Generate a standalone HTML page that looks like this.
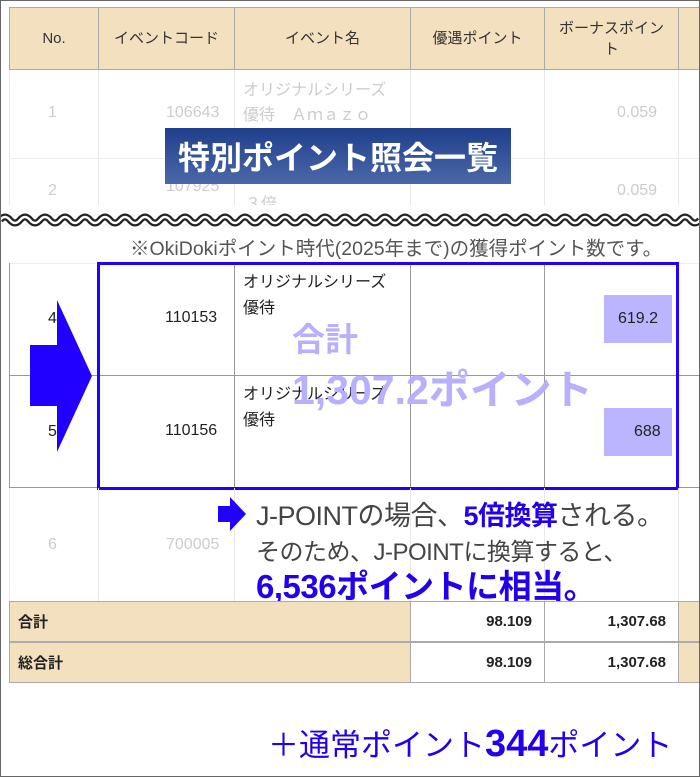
<!DOCTYPE html>
<html><head><meta charset="utf-8"><style>
*{margin:0;padding:0;box-sizing:border-box}
body{width:700px;height:777px;position:relative;background:#fff;overflow:hidden;font-family:"Liberation Sans","Noto Sans CJK JP",sans-serif;color:#222}
.frame{position:absolute;left:0;top:0;width:700px;height:777px;border:1px solid #666}
.a{position:absolute}
.hd{position:absolute;top:7px;height:63px;background:#f3e0bf;border:1px solid #aaa;display:flex;align-items:center;justify-content:center;text-align:center;font-size:15px;color:#333;line-height:21px}
.vl{position:absolute;width:1px;background:#e8e8e8}
.vg{position:absolute;width:1px;background:#999}
.f{color:#ccc;font-size:16px;position:absolute}
.d{color:#222;font-size:16px;position:absolute}
.ft{position:absolute;height:41px;border:1px solid #aaa;font-size:15px;display:flex;align-items:center}
</style></head><body>
<div class="frame"></div>
<div class="hd" style="left:9px;width:90px">No.</div>
<div class="hd" style="left:98px;width:137px">イベントコード</div>
<div class="hd" style="left:234px;width:177px">イベント名</div>
<div class="hd" style="left:410px;width:135px">優遇ポイント</div>
<div class="hd" style="left:544px;width:135px">ボーナスポイン<br>ト</div>
<div class="hd" style="left:678px;width:30px"></div>
<div class="vl" style="left:9px;top:70px;height:150px"></div>
<div class="vl" style="left:98px;top:70px;height:150px"></div>
<div class="vl" style="left:234px;top:70px;height:150px"></div>
<div class="vl" style="left:410px;top:70px;height:150px"></div>
<div class="vl" style="left:544px;top:70px;height:150px"></div>
<div class="vl" style="left:678px;top:70px;height:150px"></div>
<div class="a" style="left:9px;top:158px;width:690px;height:1px;background:#eee"></div>
<div class="f" style="left:48px;top:104px">1</div>
<div class="f" style="left:166px;top:104px">106643</div>
<div class="f" style="left:243px;top:78px;line-height:25px">オリジナルシリーズ<br>優待　Ａｍａｚｏ</div>
<div class="f" style="left:617px;top:104px">0.059</div>
<div class="f" style="left:48px;top:182px">2</div>
<div class="f" style="left:166px;top:178px">107925</div>
<div class="f" style="left:245px;top:190px">３倍</div>
<div class="f" style="left:617px;top:182px">0.059</div>
<div class="a" style="left:165px;top:128px;width:346px;height:56px;background:linear-gradient(#1f3f8c,#4a68a8);color:#fff;font-weight:bold;font-size:32px;display:flex;align-items:center;justify-content:center">特別ポイント照会一覧</div>
<div class="a" style="left:0;top:205px;width:700px;height:58px;background:#fff"></div>
<svg class="a" style="left:0;top:208px" width="700" height="24"><g transform="translate(0,2)"><path id="w" d="M0 10 Q5 4 10 10 T20 10 T30 10 T40 10 T50 10 T60 10 T70 10 T80 10 T90 10 T100 10 T110 10 T120 10 T130 10 T140 10 T150 10 T160 10 T170 10 T180 10 T190 10 T200 10 T210 10 T220 10 T230 10 T240 10 T250 10 T260 10 T270 10 T280 10 T290 10 T300 10 T310 10 T320 10 T330 10 T340 10 T350 10 T360 10 T370 10 T380 10 T390 10 T400 10 T410 10 T420 10 T430 10 T440 10 T450 10 T460 10 T470 10 T480 10 T490 10 T500 10 T510 10 T520 10 T530 10 T540 10 T550 10 T560 10 T570 10 T580 10 T590 10 T600 10 T610 10 T620 10 T630 10 T640 10 T650 10 T660 10 T670 10 T680 10 T690 10 T700 10" fill="none" stroke="#222" stroke-width="7"/><path d="M0 10 Q5 4 10 10 T20 10 T30 10 T40 10 T50 10 T60 10 T70 10 T80 10 T90 10 T100 10 T110 10 T120 10 T130 10 T140 10 T150 10 T160 10 T170 10 T180 10 T190 10 T200 10 T210 10 T220 10 T230 10 T240 10 T250 10 T260 10 T270 10 T280 10 T290 10 T300 10 T310 10 T320 10 T330 10 T340 10 T350 10 T360 10 T370 10 T380 10 T390 10 T400 10 T410 10 T420 10 T430 10 T440 10 T450 10 T460 10 T470 10 T480 10 T490 10 T500 10 T510 10 T520 10 T530 10 T540 10 T550 10 T560 10 T570 10 T580 10 T590 10 T600 10 T610 10 T620 10 T630 10 T640 10 T650 10 T660 10 T670 10 T680 10 T690 10 T700 10" fill="none" stroke="#fff" stroke-width="2.5"/></g></svg>
<div class="frame" style="border-right:none;border-top:none;border-bottom:none"></div>
<div class="a" style="left:130px;top:232px;font-size:19.5px;color:#555;white-space:nowrap">※OkiDokiポイント時代(2025年まで)の獲得ポイント数です。</div>
<div class="a" style="left:9px;top:263px;width:691px;height:1px;background:#eee"></div>
<div class="vg" style="left:9px;top:263px;height:225px"></div>
<div class="vg" style="left:234px;top:263px;height:225px"></div>
<div class="vg" style="left:410px;top:263px;height:225px"></div>
<div class="vg" style="left:544px;top:263px;height:225px"></div>
<div class="a" style="left:9px;top:375px;width:691px;height:1px;background:#999"></div>
<div class="a" style="left:9px;top:487px;width:691px;height:1px;background:#999"></div>
<div class="d" style="left:48px;top:310px">4</div>
<div class="d" style="left:48px;top:423px">5</div>
<div class="d" style="left:165px;top:309px">110153</div>
<div class="d" style="left:243px;top:270px;line-height:26px">オリジナルシリーズ<br>優待</div>
<div class="d" style="left:165px;top:422px">110156</div>
<div class="d" style="left:243px;top:382px;line-height:26px">オリジナルシリーズ<br>優待</div>
<div class="a" style="left:604px;top:295px;width:68px;height:48px;background:#bbb5ff"></div>
<div class="d" style="left:618px;top:310px">619.2</div>
<div class="a" style="left:604px;top:408px;width:68px;height:48px;background:#bbb5ff"></div>
<div class="d" style="left:634px;top:423px">688</div>
<div class="a" style="left:97px;top:262px;width:582px;height:228px;border:3px solid #2200ff"></div>
<div class="a" style="left:292px;top:313px;font-size:33px;font-weight:bold;color:#b8b0ff">合計</div>
<div class="a" style="left:292px;top:356px;font-size:41px;font-weight:bold;color:#b8b0ff;white-space:nowrap">1,307.2ポイント</div>
<svg class="a" style="left:0;top:290px" width="100" height="170"><polygon points="30,55 57,55 57,10 92,86 57,162 57,116 30,116" fill="#2200ff"/></svg>
<div class="vl" style="left:9px;top:488px;height:113px"></div>
<div class="vl" style="left:98px;top:488px;height:113px"></div>
<div class="vl" style="left:234px;top:488px;height:113px"></div>
<div class="vl" style="left:410px;top:488px;height:113px"></div>
<div class="vl" style="left:544px;top:488px;height:113px"></div>
<div class="vl" style="left:678px;top:488px;height:113px"></div>
<div class="f" style="left:48px;top:536px">6</div>
<div class="f" style="left:166px;top:536px">700005</div>
<svg class="a" style="left:217px;top:496px" width="30" height="36"><polygon points="1,10 13,10 13,1 29,18 13,35 13,26 1,26" fill="#2200ff"/></svg>
<div class="a" style="left:256px;top:494px;font-size:27px;color:#444;white-space:nowrap;letter-spacing:-0.5px">J-POINTの場合、<b style="color:#2200ee">5倍換算</b>される。</div>
<div class="a" style="left:256px;top:532px;font-size:24px;color:#444;white-space:nowrap;letter-spacing:-0.5px">そのため、J-POINTに換算すると、</div>
<div class="a" style="left:256px;top:560px;font-size:33px;font-weight:bold;color:#2200ee;white-space:nowrap;letter-spacing:-0.5px">6,536ポイントに相当。</div>
<div class="ft" style="left:9px;top:601px;width:402px;background:#f3e0bf;padding-left:8px;font-weight:bold">合計</div>
<div class="ft" style="left:410px;top:601px;width:135px;justify-content:flex-end;padding-right:12px;font-weight:bold">98.109</div>
<div class="ft" style="left:544px;top:601px;width:135px;justify-content:flex-end;padding-right:12px;font-weight:bold">1,307.68</div>
<div class="ft" style="left:678px;top:601px;width:30px;background:#f3e0bf"></div>
<div class="ft" style="left:9px;top:642px;width:402px;background:#f3e0bf;padding-left:8px;font-weight:bold">総合計</div>
<div class="ft" style="left:410px;top:642px;width:135px;justify-content:flex-end;padding-right:12px;font-weight:bold">98.109</div>
<div class="ft" style="left:544px;top:642px;width:135px;justify-content:flex-end;padding-right:12px;font-weight:bold">1,307.68</div>
<div class="ft" style="left:678px;top:642px;width:30px;background:#f3e0bf"></div>
<div class="a" style="left:268px;top:720px;font-size:31px;color:#2200ee;white-space:nowrap">＋通常ポイント<b style="font-size:38px">344</b>ポイント</div>
<div class="frame" style="border-left:none;border-top:none;border-bottom:none"></div>
</body></html>
